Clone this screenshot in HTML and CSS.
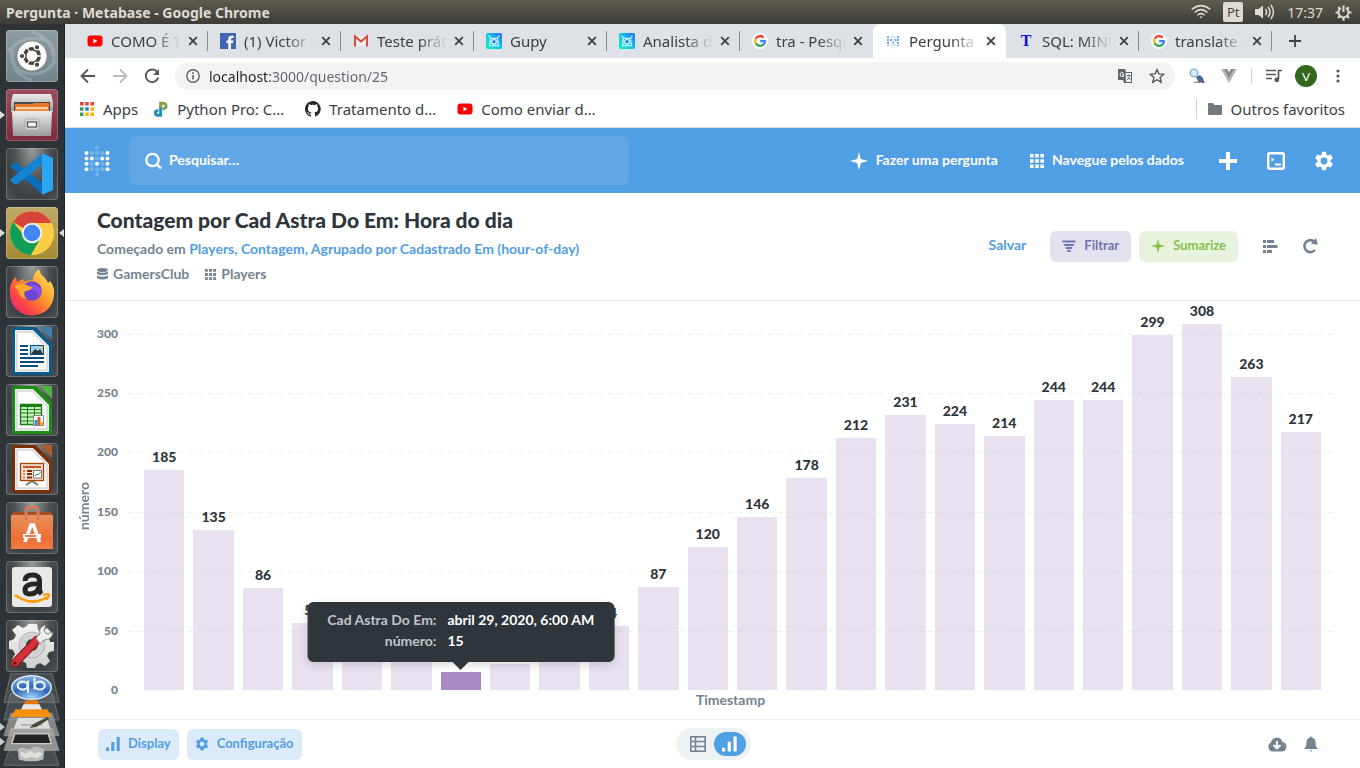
FILE: index.html
```html
<!DOCTYPE html>
<html lang="pt">
<head>
<meta charset="utf-8">
<title>Pergunta · Metabase</title>
<link rel="stylesheet" href="styles.css">
</head>
<body>
<svg class="sprite" width="0" height="0" aria-hidden="true">
  <defs>
    <linearGradient id="steel" x1="0" y1="0" x2="0" y2="1"><stop offset="0" stop-color="#ededed"/><stop offset="1" stop-color="#9b9b9b"/></linearGradient>
    <linearGradient id="pale" x1="0" y1="0" x2="0" y2="1"><stop offset="0" stop-color="#f4f4f4"/><stop offset="1" stop-color="#cfcfcf"/></linearGradient>
    <linearGradient id="fox" x1="1" y1="0" x2="0" y2="1"><stop offset="0" stop-color="#fff36b"/><stop offset=".4" stop-color="#ffa02c"/><stop offset=".7" stop-color="#ff4a41"/><stop offset="1" stop-color="#e31587"/></linearGradient>
    <linearGradient id="gupy" x1="0" y1="1" x2="1" y2="0"><stop offset="0" stop-color="#12f0c0"/><stop offset=".55" stop-color="#14bff0"/><stop offset="1" stop-color="#2469ff"/></linearGradient>
    <linearGradient id="bag" x1="0" y1="0" x2="0" y2="1"><stop offset="0" stop-color="#e9905a"/><stop offset=".7" stop-color="#ee6f36"/><stop offset="1" stop-color="#f27c46"/></linearGradient>
    <radialGradient id="orb" cx=".5" cy=".9" r=".9"><stop offset="0" stop-color="#9fd0fa"/><stop offset=".5" stop-color="#2c66b8"/><stop offset="1" stop-color="#8fb4e2"/></radialGradient>
    <symbol id="close" viewBox="0 0 10 10"><path d="M1.2 1.2l7.6 7.6M8.8 1.2L1.2 8.8" stroke="#3c4043" stroke-width="1.8" fill="none"/></symbol>
    <symbol id="youtube" viewBox="0 0 16 16"><rect x=".5" y="2.5" width="15" height="11" rx="3" fill="#f00"/><path d="M6.4 5.7v4.6l4-2.3z" fill="#fff"/></symbol>
    <symbol id="google" viewBox="0 0 16 16"><circle cx="8" cy="8" r="8" fill="#fff"/><g fill="none" stroke-width="2.4"><path d="M11.6 4.6A4.9 4.9 0 0 0 3.7 5.7" stroke="#ea4335"/><path d="M3.7 5.7a4.9 4.9 0 0 0 0 4.6" stroke="#fbbc05"/><path d="M3.7 10.3a4.9 4.9 0 0 0 7.6 1.3" stroke="#34a853"/><path d="M11.3 11.6A4.9 4.9 0 0 0 12.9 8.1H8.2" stroke="#4285f4"/></g></symbol>
    <symbol id="gupyicon" viewBox="0 0 16 16"><rect width="16" height="16" rx="1.5" fill="url(#gupy)"/><path d="M2.500 2.500l2.300 3M13.500 2.500l-2.300 3M4.500 5.300h7l1 7.500h-9z" fill="none" stroke="#e9fbff" stroke-width="1.100"/><circle cx="8" cy="8.800" r="2.300" fill="#1583d8" stroke="#e9fbff" stroke-width="1.100"/></symbol>
    <symbol id="star4" viewBox="0 0 18 18"><path d="M9 0l1.900 7.100L18 9l-7.100 1.900L9 18l-1.900-7.100L0 9l7.100-1.900z" fill="currentColor"/></symbol>
    <symbol id="grid9" viewBox="0 0 14 14"><path d="M0 0h3.600v3.600H0zM5.200 0h3.600v3.600H5.200zM10.400 0H14v3.600h-3.600zM0 5.200h3.600v3.600H0zM5.200 5.200h3.600v3.600H5.200zM10.400 5.200H14v3.600h-3.600zM0 10.400h3.600V14H0zM5.200 10.400h3.600V14H5.200zM10.400 10.400H14V14h-3.600z" fill="currentColor"/></symbol>
    <symbol id="gear" viewBox="0 0 24 24"><path fill="currentColor" fill-rule="evenodd" d="M9.600 1h4.800l.6 3.400 1.900 1.100 3.300-1.200 2.400 4.300-2.600 2.200v2.400l2.600 2.200-2.400 4.300-3.300-1.200-1.900 1.100-.6 3.400H9.600L9 19.600l-1.900-1.100-3.300 1.200-2.400-4.300L4 13.200v-2.400L1.400 8.600l2.400-4.300 3.300 1.200L9 4.400zM12 7.900a4.100 4.100 0 1 0 0 8.200 4.100 4.100 0 0 0 0-8.200z"/></symbol>
    <symbol id="bars" viewBox="0 0 14 14"><path d="M0 10.500h3V14H0zM5.300 5h3v9h-3zM10.700 0h3v14h-3z" fill="currentColor"/></symbol>
  </defs>
</svg>

<header class="panel">
  <span class="panel-title">Pergunta · Metabase - Google Chrome</span>
  <div class="indicators">
    <svg width="20" height="16" viewBox="0 0 20 16" fill="none" stroke="#dfdbd2" stroke-width="1.500"><path d="M.7 5.500Q10-2.300 19.300 5.500M3.500 8.500Q10 2.800 16.500 8.500M6.300 11.300Q10 8 13.700 11.300"/><path d="M8.300 12.600h3.400L10 14.600z" fill="#dfdbd2" stroke="none"/></svg>
    <span class="keyboard">Pt</span>
    <svg width="20" height="16" viewBox="0 0 20 16"><path d="M0 5h3.500L8 1.500v13L3.500 11H0z" fill="#dfdbd2"/><path d="M10.500 5q2.200 3 0 6M13 3q4 5 0 10M15.700 1q5.600 7 0 14" fill="none" stroke="#dfdbd2" stroke-width="1.500"/></svg>
    <span class="clock">17:37</span>
    <svg width="17" height="17" viewBox="0 0 17 17" fill="none" stroke="#dfdbd2"><path d="M5.800 4.200a5 5 0 1 0 5.400 0" stroke-width="2"/><path d="M8.500 1.500V8" stroke-width="2"/><path d="M3.200 3.200l1.500 1.500M13.800 3.200l-1.500 1.500M.5 8.500h2.500M14 8.500h2.500M3 14l1.800-1.800M14 14l-1.800-1.800M8.500 16.800v-3" stroke-width="2.200"/></svg>
  </div>
</header>

<div class="desktop">
  <nav class="launcher" aria-label="Launcher">
    <div class="tiles">
      <a href="#" class="tile slate" aria-label="Ubuntu"><svg viewBox="0 0 52 52"><g fill="none" stroke="#fff" stroke-opacity=".18" stroke-width="3"><path d="M2 22Q14 6 34 9T46 36M50 30Q38 48 20 43T7 20M26 2Q46 8 47 26M26 50Q8 46 8 30"/></g><circle cx="26" cy="26" r="14.500" fill="#fff"/><circle cx="26" cy="26" r="7.300" fill="none" stroke="#444" stroke-width="3.600"/><path d="M26 26l11.500 0M26 26l-6-10.500M26 26l-6 10.500" stroke="#fff" stroke-width="1.300"/><g fill="#444" stroke="#fff" stroke-width="1.200"><circle cx="16" cy="26" r="2.700"/><circle cx="31" cy="17.300" r="2.700"/><circle cx="31" cy="34.700" r="2.700"/></g></svg></a>
      <a href="#" class="tile wine running" aria-label="Arquivos"><svg viewBox="0 0 52 52"><path d="M7 5h38l2 8v10H5V13z" fill="url(#steel)"/><path d="M8 13h36v10H8z" fill="#4b4b4b"/><path d="M9 15h17l2-1h15v8H9z" fill="#e2762f"/><path d="M10 18h32v5H10z" fill="#f9cf9c"/><path d="M9 20h34v4H9z" fill="#e98d41"/><path d="M6 22h40l-1 25H7z" fill="url(#steel)"/><rect x="19" y="30" width="14" height="11" rx="2" fill="#d6d6d6" stroke="#aaa"/><rect x="21.500" y="33" width="9" height="5" fill="#fff" stroke="#555" stroke-width="1.300"/></svg></a>
      <a href="#" class="tile dark" aria-label="Visual Studio Code"><svg viewBox="0 0 52 52"><path d="M5 17l5-3 27 22v11L5 19z" fill="#0a6fbb"/><path d="M5 34l5 3 27-21V5L5 31z" fill="#1484d2"/><path d="M36 5l11 5v32l-11 5z" fill="#2aa5f2"/></svg></a>
      <a href="#" class="tile gold running focused" aria-label="Google Chrome"><svg viewBox="0 0 52 52"><circle cx="26" cy="26" r="22" fill="#fdd04b"/><path d="M26 26L7 15A22 22 0 0 1 45.500 16H26z" fill="#d64537"/><path d="M7 15A22 22 0 0 0 25 48l10-17H20z" fill="#0f9d58"/><path d="M45.500 16H26v10l9 5-10 17A22 22 0 0 0 45.500 16z" fill="#ffcd43"/><circle cx="26" cy="26" r="10.300" fill="#f1f1f1"/><circle cx="26" cy="26" r="8.300" fill="#4285f4"/></svg></a>
      <a href="#" class="tile dark" aria-label="Firefox"><svg viewBox="0 0 52 52"><path d="M4 28C3 20 6 14 10 11l1 5q4-3 8-3l-2 3q6-2 10-2 0-7 6-11 1 5 5 8 3 3 4 6l2-2q5 6 4 14A22 21 0 0 1 4 28z" fill="url(#fox)"/><circle cx="26" cy="25" r="9.800" fill="#6b46cf"/><path d="M16 24q5-6 14-5 5 2 5 8a9 9 0 0 1-4 6q2-6-2-9z" fill="#9059f6" opacity=".7"/><path d="M8 20q8-4 12-1 4 2 7 2-3 4-8 4-2 5 2 8-8-1-9-9z" fill="#ffa92f"/></svg></a>
      <a href="#" class="tile dark" aria-label="Writer"><svg viewBox="0 0 52 52"><path d="M9 2h21l16 17v28q0 3-3 3H9q-3 0-3-3V5q0-3 3-3z" fill="#0b5a8c"/><path d="M34 2h12v13z" fill="#3b80ad"/><path d="M9 5h18l16 16v26H9z" fill="#eee"/><path d="M11 7h16v1l14 14v23H11z" fill="#fdfdfd" stroke="#c9c9c9"/><path d="M14 21h8M14 25h8M14 29h8M14 33h24M14 37h24M14 41h18" stroke="#05507f" stroke-width="1.800"/><rect x="24.500" y="20.500" width="13" height="9" fill="#9bd0f2" stroke="#05507f"/><path d="M25 29l4-5 3 2 2-2 3 5z" fill="#333"/><circle cx="35.500" cy="22.500" r="1.500" fill="#f6c03d"/></svg></a>
      <a href="#" class="tile dark" aria-label="Calc"><svg viewBox="0 0 52 52"><path d="M9 2h21l16 17v28q0 3-3 3H9q-3 0-3-3V5q0-3 3-3z" fill="#1b8d10"/><path d="M34 2h12v13z" fill="#4fb445"/><path d="M9 5h18l16 16v26H9z" fill="#eee"/><path d="M11 7h16v1l14 14v23H11z" fill="#fdfdfd" stroke="#c9c9c9"/><path d="M14.500 20.500h21v20h-21z" fill="#c8f0c0" stroke="#1a7d12" stroke-width="1.400"/><path d="M14 22h22" stroke="#1a7d12" stroke-width="2"/><path d="M14 25.500h22M14 29h22M14 33h22M14 37h22M21.500 20v21M28.500 20v21" stroke="#1a7d12" stroke-width="1"/><path d="M27.500 31.500h10v10h-10z" fill="#fff" stroke="#888"/><path d="M28.500 36h3v5h-3z" fill="#2196e0"/><path d="M31.500 33h3v8h-3z" fill="#d8572a"/><path d="M34.500 38h2.500v3h-2.500z" fill="#f0b400"/></svg></a>
      <a href="#" class="tile dark" aria-label="Impress"><svg viewBox="0 0 52 52"><path d="M9 2h21l16 17v28q0 3-3 3H9q-3 0-3-3V5q0-3 3-3z" fill="#7c2e06"/><path d="M34 2h12v13z" fill="#a95c33"/><path d="M9 5h18l16 16v26H9z" fill="#eee"/><path d="M11 7h16v1l14 14v23H11z" fill="#fdfdfd" stroke="#c9c9c9"/><path d="M20 42l6-4 6 4" fill="none" stroke="#777" stroke-width="2"/><rect x="14.500" y="20.500" width="23" height="17" fill="#fbe6d8" stroke="#a8450f" stroke-width="1.400"/><path d="M17 24h18" stroke="#c45a1c" stroke-width="2.200"/><path d="M17 28h2M17 31h2M17 34.500h2" stroke="#d9824d" stroke-width="2"/><path d="M21 28h5M21 31h5M21 34.500h5" stroke="#7c2e06" stroke-width="2"/><rect x="27.500" y="27.500" width="8" height="7.500" fill="#fff" stroke="#777"/><path d="M29 33l2-2 1 1 2.500-3" stroke="#2f9e2f" fill="none"/></svg></a>
      <a href="#" class="tile dark" aria-label="Ubuntu Software"><svg viewBox="0 0 52 52"><path d="M7 10h38l2 5H5z" fill="#a84c2a"/><path d="M5 13h42v34H5z" fill="url(#bag)"/><path d="M20 18V9q0-4 6-4t6 4v9" fill="none" stroke="#d97a5c" stroke-width="3"/><path d="M19 40l6-17h2.500L33.500 40" fill="none" stroke="#fff" stroke-width="3.600"/><path d="M17 34h18" stroke="#fff" stroke-width="4"/><path d="M19 34h11" stroke="#ee6f36" stroke-width="1.800"/></svg></a>
      <a href="#" class="tile dark" aria-label="Amazon"><svg viewBox="0 0 52 52"><rect x="6" y="6" width="40" height="40" rx="3" fill="#e9e9e9"/><path d="M19 20q0-6 7.500-6t7 7v7q0 3 2 5M33 23q-14-1-14 6 0 4 5 4 7 0 9-7" fill="none" stroke="#262626" stroke-width="5"/><path d="M9 34q17 12 32 2" fill="none" stroke="#ff9900" stroke-width="2.700"/><path d="M37 34q7-2 6 0t-2 5" fill="none" stroke="#ff9900" stroke-width="2"/></svg></a>
      <a href="#" class="tile dark" aria-label="Configurações"><svg viewBox="0 0 52 52"><path fill="url(#pale)" d="M22 4h9l1 6 4 2 5-4 5 5-3 6 1 3h4v9l-5 1-2 4 3 5-5 5-5-3-4 2-1 3h-8l-1-5-4-2-5 3-5-5 3-5-2-4-4-1v-8l5-2 2-4-4-5 6-5 5 3 4-2z"/><circle cx="26" cy="25" r="13" fill="#d2d2d2" stroke="#b4b4b4"/><circle cx="26" cy="25" r="6" fill="#444"/><path d="M9 43L31 20" stroke="#8d1418" stroke-width="8.500" stroke-linecap="round"/><path d="M9 43L31 20" stroke="#d5303a" stroke-width="6.500" stroke-linecap="round"/><path d="M30 18l4-4q-2-7 6-9l-2 6 3 3 6-2q-1 8-9 8l-4 4z" fill="#eee" stroke="#888"/><circle cx="9" cy="43" r="1.500" fill="#60090c"/></svg></a>
    </div>
    <svg class="folded" viewBox="0 0 65 96"><g fill="#8a9094" fill-opacity=".28" stroke="#a8adb0" stroke-opacity=".45"><path d="M11 1h42l7 29H4z"/><path d="M11 21h42l7 27H4z"/><path d="M11 41h42l7 23H4z" fill="#999" fill-opacity=".8"/><path d="M11 56h42l7 23H4z" fill="#aaa" fill-opacity=".8"/><path d="M9 79h46l5 15H4z"/></g><ellipse cx="32" cy="15" rx="20" ry="12" fill="url(#orb)" stroke="#dbe8f6" stroke-width="1.500"/><g fill="none" stroke="#e9f2fc" stroke-width="2.200"><ellipse cx="23" cy="13" rx="5" ry="4"/><path d="M28.500 8v12M35 5v12"/><ellipse cx="40.500" cy="13" rx="5" ry="4"/></g><path d="M26 28h12l4 10H22z" fill="#e8750c"/><path d="M24 32h16l3 6H21z" fill="#e8e8e8"/><path d="M16 37h32l5 8H11z" fill="#f7900f"/><path d="M18 46h30l3 11H14z" fill="#ddd"/><path d="M21 53h22" stroke="#888"/><path d="M30 56l4-4 14-7 2 2-13 8z" fill="#4b4b38"/><path d="M15 62h34l3 10H12z" fill="#222" stroke="#c8c8c8" stroke-width="1.500"/><path d="M18 78q4-3 8-1t7-1 12 2l-1 10q-12 4-25 0z" fill="#b9bcba"/><path d="M21 80l5 2 4-3 5 3 5-2 3 3-6 4-5-2-6 2-5-3z" fill="#dfe1df"/><path d="M0 51l5 4-5 4zM0 66l5 4-5 4z" fill="#ccc"/></svg>
  </nav>

  <div class="browser">
    <div class="tabs">
      <div class="tab"><svg class="fav"><use href="#youtube"/></svg><span class="tab-name">COMO É TU</span><button class="tab-close" aria-label="Fechar"><svg><use href="#close"/></svg></button></div>
      <div class="tab"><svg class="fav" viewBox="0 0 16 16"><rect width="16" height="16" fill="#4267b2"/><path d="M8.300 16V10H6.400V7.500h1.900V6q0-3.300 3.200-3.300h2V5h-1.300q-1.200 0-1.200 1.200v1.300h2.400L13 10h-2v6z" fill="#fff"/></svg><span class="tab-name">(1) Victor S</span><button class="tab-close" aria-label="Fechar"><svg><use href="#close"/></svg></button></div>
      <div class="tab"><svg class="fav" viewBox="0 0 16 16"><path d="M2 3h12v10.500H2z" fill="#eee"/><path d="M2 13.500V3.500l6 5 6-5v10" fill="none" stroke="#d54b3d" stroke-width="2"/></svg><span class="tab-name">Teste prát</span><button class="tab-close" aria-label="Fechar"><svg><use href="#close"/></svg></button></div>
      <div class="tab"><svg class="fav"><use href="#gupyicon"/></svg><span class="tab-name">Gupy</span><button class="tab-close" aria-label="Fechar"><svg><use href="#close"/></svg></button></div>
      <div class="tab"><svg class="fav"><use href="#gupyicon"/></svg><span class="tab-name">Analista d</span><button class="tab-close" aria-label="Fechar"><svg><use href="#close"/></svg></button></div>
      <div class="tab last"><svg class="fav"><use href="#google"/></svg><span class="tab-name">tra - Pesqu</span><button class="tab-close" aria-label="Fechar"><svg><use href="#close"/></svg></button></div>
      <div class="tab active"><svg class="fav" viewBox="0 0 16 16" fill="#509ee3"><path d="M2 3h2v2H2zM2 6h2v2H2zM2 9h2v2H2zM2 12h2v1H2zM5 6h2v2H5zM7.200 8.500h2v2h-2zM9.500 6h2v2h-2zM12 3h2v2h-2zM12 6h2v2h-2zM12 9h2v2h-2zM12 12h2v1h-2z" opacity=".85"/><path d="M7 1h2v1.500H7zM5 3h6v2H5zM5 11h6v2H5zM7 14h2v1.500H7z" opacity=".2"/></svg><span class="tab-name">Pergunta ·</span><button class="tab-close" aria-label="Fechar"><svg><use href="#close"/></svg></button></div>
      <div class="tab"><span class="fav letter-fav">T</span><span class="tab-name">SQL: MINU</span><button class="tab-close" aria-label="Fechar"><svg><use href="#close"/></svg></button></div>
      <div class="tab"><svg class="fav"><use href="#google"/></svg><span class="tab-name">translate -</span><button class="tab-close" aria-label="Fechar"><svg><use href="#close"/></svg></button></div>
      <button class="new-tab" aria-label="Nova guia"><svg width="12" height="12" viewBox="0 0 12 12"><path d="M6 0v12M0 6h12" stroke="#3c4043" stroke-width="1.800"/></svg></button>
    </div>

    <div class="toolbar">
      <button class="tool" aria-label="Voltar"><svg width="16" height="16" viewBox="0 0 16 16"><path d="M15 8H2M8 1.500L1.500 8 8 14.500" fill="none" stroke="#54585c" stroke-width="1.900"/></svg></button>
      <button class="tool" aria-label="Avançar"><svg width="16" height="16" viewBox="0 0 16 16"><path d="M1 8h13M8 1.500L14.500 8 8 14.500" fill="none" stroke="#babcbe" stroke-width="1.900"/></svg></button>
      <button class="tool" aria-label="Recarregar"><svg width="16" height="16" viewBox="0 0 16 16"><path d="M13.500 4.500A6.300 6.300 0 1 0 14.200 9.500" fill="none" stroke="#54585c" stroke-width="1.900"/><path d="M15 1v6H9z" fill="#54585c"/></svg></button>
      <div class="omnibox">
        <svg width="14" height="14" viewBox="0 0 14 14"><circle cx="7" cy="7" r="6.200" fill="none" stroke="#5f6368" stroke-width="1.400"/><path d="M7 6v4.500M7 3.300v1.600" stroke="#5f6368" stroke-width="1.600"/></svg>
        <input class="url" type="text" aria-label="Endereço" value="localhost:3000/question/25">
        <svg width="16" height="16" viewBox="0 0 16 16"><path d="M1 1h7l1 3h6v11H7l-1-3H1z" fill="#5f6368"/><path d="M8.500 5H14v9H9z" fill="#f1f3f4"/><path d="M6.500 5.200A2 2 0 1 0 7 6.800H5" stroke="#fff" fill="none"/><path d="M9.500 7.500h4M11.500 6.500v1M10 12q2.500-1.500 3-4.500M10.500 9l3 3" stroke="#5f6368" fill="none" stroke-width=".9"/></svg>
        <svg width="16" height="16" viewBox="0 0 16 16"><path d="M8 1.500l1.900 4.400 4.800.4-3.600 3.200 1.100 4.700L8 11.700l-4.200 2.500 1.100-4.700L1.300 6.300l4.800-.4z" fill="none" stroke="#54585c" stroke-width="1.400"/></svg>
      </div>
      <div class="extensions">
        <svg width="16" height="16" viewBox="0 0 16 16"><circle cx="5" cy="5" r="3.800" fill="#d8eefb" stroke="#8cb8d6" stroke-width="1.500"/><path d="M7 9l4-2 3 3 1 4-5 1z" fill="#456a94"/><path d="M5 13.500h4l2 1.500H5z" fill="#999"/><path d="M13 14l2.500.5" stroke="#a33" stroke-width="1.500"/></svg>
        <svg width="16" height="16" viewBox="0 0 16 16"><path d="M0 1h6l2 3.500L10 1h6L8 15z" fill="#b5b5b5"/><path d="M3 1h3l2 3.500L10 1h3L8 10z" fill="#8a8a8a"/></svg>
      </div>
      <div class="account">
        <svg width="16" height="14" viewBox="0 0 16 14"><path d="M0 1.500h10M0 5.500h10M0 9.500h6M16 1.500h-3.500V10" fill="none" stroke="#54585c" stroke-width="1.700"/><circle cx="10.800" cy="10.800" r="2.400" fill="#54585c"/></svg>
        <button class="avatar">V</button>
        <svg width="16" height="16" viewBox="0 0 16 16" fill="#54585c"><circle cx="8" cy="3" r="1.600"/><circle cx="8" cy="8" r="1.600"/><circle cx="8" cy="13" r="1.600"/></svg>
      </div>
    </div>

    <nav class="bookmarks" aria-label="Favoritos">
      <a href="#" class="bookmark apps"><svg viewBox="0 0 16 16"><path d="M1 1h3.500v3.500H1zM6.200 1h3.500v3.500H6.200zM11.500 1H15v3.500h-3.500z" fill="#ea4335"/><path d="M1 6.200h3.500v3.500H1zM1 11.500h3.500V15H1z" fill="#34a05a"/><path d="M6.200 6.200h3.500v3.500H6.200z" fill="#2a7de8"/><path d="M11.500 6.200H15v3.500h-3.500zM6.200 11.500h3.500V15H6.200zM11.500 11.500H15V15h-3.500z" fill="#f7b300"/></svg><span>Apps</span></a>
      <a href="#" class="bookmark"><svg viewBox="0 0 16 16"><path d="M7.700 5v9.200H4.600a2.200 2.200 0 0 1 0-4.400h.9" fill="none" stroke="#2590b8" stroke-width="3"/><path d="M7.700 7V2.200h2.600a2.700 2.700 0 0 1 0 5.600h-.8" fill="none" stroke="#83a04a" stroke-width="3"/></svg><span>Python Pro: C…</span></a>
      <a href="#" class="bookmark"><svg viewBox="0 0 16 16"><path fill="#24292e" d="M8 0C3.600 0 0 3.600 0 8c0 3.500 2.300 6.500 5.500 7.600.4.100.5-.2.500-.4v-1.500c-2.200.5-2.700-.9-2.700-.9-.4-.9-.9-1.200-.9-1.200-.7-.5.100-.5.100-.5.800.100 1.200.800 1.200.800.700 1.200 1.900.900 2.300.700.100-.500.300-.900.500-1.100-1.800-.200-3.600-.900-3.600-4 0-.900.300-1.600.800-2.100-.100-.200-.400-1 .100-2.100 0 0 .700-.200 2.200.800a7.600 7.600 0 0 1 4 0c1.500-1 2.200-.800 2.200-.800.400 1.100.200 1.900.100 2.100.500.600.800 1.300.800 2.100 0 3.100-1.900 3.700-3.700 3.900.300.300.600.800.600 1.500v2.200c0 .200.100.500.500.400A8 8 0 0 0 8 0z"/></svg><span>Tratamento d…</span></a>
      <a href="#" class="bookmark"><svg><use href="#youtube"/></svg><span>Como enviar d…</span></a>
      <a href="#" class="bookmark other"><svg viewBox="0 0 16 16"><path d="M1 3q0-1 1-1h4l1.500 2H14q1 0 1 1v8q0 1-1 1H2q-1 0-1-1z" fill="#74787c"/></svg><span>Outros favoritos</span></a>
    </nav>

    <div class="app">
      <header class="app-bar">
        <a href="#" class="logo" aria-label="Metabase"><svg width="32" height="32" viewBox="0 0 32 32" fill="#fff"><g><circle cx="5.500" cy="8" r="2"/><circle cx="26.500" cy="8" r="2"/><circle cx="5.500" cy="13.400" r="2"/><circle cx="10.800" cy="13.400" r="2"/><circle cx="21.200" cy="13.400" r="2"/><circle cx="26.500" cy="13.400" r="2"/><circle cx="5.500" cy="18.800" r="2"/><circle cx="16" cy="18.800" r="2"/><circle cx="26.500" cy="18.800" r="2"/><circle cx="5.500" cy="24.200" r="2"/><circle cx="26.500" cy="24.200" r="2"/></g><g opacity=".22"><circle cx="16" cy="2.500" r="2"/><circle cx="10.800" cy="8" r="2"/><circle cx="16" cy="8" r="2"/><circle cx="21.200" cy="8" r="2"/><circle cx="16" cy="13.400" r="2"/><circle cx="10.800" cy="18.800" r="2"/><circle cx="21.200" cy="18.800" r="2"/><circle cx="10.800" cy="24.200" r="2"/><circle cx="16" cy="24.200" r="2"/><circle cx="21.200" cy="24.200" r="2"/><circle cx="16" cy="29.600" r="2"/></g></svg></a>
        <label class="search"><svg width="18" height="18" viewBox="0 0 18 18"><circle cx="7.500" cy="8" r="6.200" fill="none" stroke="#fff" stroke-width="2.200"/><path d="M12 12.500l4 4" stroke="#fff" stroke-width="2.400"/></svg><input type="search" aria-label="Pesquisar" placeholder="Pesquisar…"></label>
        <nav class="app-links">
          <a href="#" class="app-link"><svg width="18" height="18"><use href="#star4"/></svg><span class="label">Fazer uma pergunta</span></a>
          <a href="#" class="app-link browse"><svg width="14" height="14"><use href="#grid9"/></svg><span class="label">Navegue pelos dados</span></a>
          <button class="app-icon" aria-label="Criar"><svg width="18" height="18" viewBox="0 0 18 18"><path d="M9 0v18M0 9h18" stroke="#fff" stroke-width="4"/></svg></button>
          <button class="app-icon" aria-label="SQL"><svg width="18" height="18" viewBox="0 0 18 18"><rect x="1.200" y="1.200" width="15.600" height="15.600" rx="1.500" fill="none" stroke="#fff" stroke-width="2.400"/><path d="M4.500 5.500L7.500 7.500 4.500 9.500z" fill="#fff"/><path d="M8 12.500h6" stroke="#fff" stroke-width="2"/></svg></button>
          <button class="app-icon" aria-label="Configurações"><svg width="20" height="20"><use href="#gear"/></svg></button>
        </nav>
      </header>

      <section class="question">
        <div class="question-info">
          <h1>Contagem por Cad Astra Do Em: Hora do dia</h1>
          <p class="lineage">Começado em <a href="#">Players, Contagem, Agrupado por Cadastrado Em (hour-of-day)</a></p>
          <div class="sources">
            <a href="#"><svg width="11" height="12" viewBox="0 0 11 12" fill="#74838f"><ellipse cx="5.500" cy="2" rx="5.500" ry="2"/><path d="M0 3.500q5.500 2.500 11 0V6q-5.500 2.500-11 0zM0 7.400q5.500 2.500 11 0V10q-5.500 3-11 0z"/></svg>GamersClub</a>
            <a href="#"><svg width="11" height="11"><use href="#grid9"/></svg>Players</a>
          </div>
        </div>
        <div class="actions">
          <button class="save"><span class="label">Salvar</span></button>
          <button class="pill filter"><svg width="14" height="12" viewBox="0 0 14 12"><path d="M1.200 1.500h11.600M2.800 5h8.400M4.500 8h5M6 11h2" stroke="currentColor" stroke-width="1.800" stroke-linecap="round"/></svg><span class="label">Filtrar</span></button>
          <button class="pill summarize"><svg width="14" height="14"><use href="#star4"/></svg><span class="label">Sumarize</span></button>
          <button class="plain editor" aria-label="Editor"><svg width="15" height="13" viewBox="0 0 15 13" fill="currentColor"><path d="M0 0h3v3H0zM4 0h7v3H4zM0 5h3v3H0zM4 5h10.500v3H4zM0 10h3v3H0zM4 10h5v3H4z"/></svg></button>
          <button class="plain" aria-label="Atualizar"><svg width="16" height="16" viewBox="0 0 16 16"><path d="M12.500 3.800A6 6 0 1 0 13 12" fill="none" stroke="currentColor" stroke-width="2.600"/><path d="M14 0l1.800 6.800-6.800-1z" fill="currentColor"/></svg></button>
        </div>
      </section>

      <section class="chart">
        <div class="y-title"><span>número</span></div>
        <div class="axis"><span>0</span><span>50</span><span>100</span><span>150</span><span>200</span><span>250</span><span>300</span></div>
        <div class="plot">
          <div class="grid-lines"><i></i><i></i><i></i><i></i><i></i><i></i></div>
          <div class="columns">
            <div class="column"><b>185</b><div class="bar" style="--v:185"></div></div>
            <div class="column"><b>135</b><div class="bar" style="--v:135"></div></div>
            <div class="column"><b>86</b><div class="bar" style="--v:86"></div></div>
            <div class="column"><b>56</b><div class="bar" style="--v:56"></div></div>
            <div class="column"><div class="bar" style="--v:40"></div></div>
            <div class="column"><div class="bar" style="--v:30"></div></div>
            <div class="column"><div class="bar selected" style="--v:15">
              <dl class="tooltip"><dt>Cad Astra Do Em:</dt><dd>abril 29, 2020, 6:00 AM</dd><dt>número:</dt><dd>15</dd></dl>
            </div></div>
            <div class="column"><div class="bar" style="--v:22"></div></div>
            <div class="column"><div class="bar" style="--v:38"></div></div>
            <div class="column"><b>54</b><div class="bar" style="--v:54"></div></div>
            <div class="column"><b>87</b><div class="bar" style="--v:87"></div></div>
            <div class="column"><b>120</b><div class="bar" style="--v:120"></div></div>
            <div class="column"><b>146</b><div class="bar" style="--v:146"></div></div>
            <div class="column"><b>178</b><div class="bar" style="--v:178"></div></div>
            <div class="column"><b>212</b><div class="bar" style="--v:212"></div></div>
            <div class="column"><b>231</b><div class="bar" style="--v:231"></div></div>
            <div class="column"><b>224</b><div class="bar" style="--v:224"></div></div>
            <div class="column"><b>214</b><div class="bar" style="--v:214"></div></div>
            <div class="column"><b>244</b><div class="bar" style="--v:244"></div></div>
            <div class="column"><b>244</b><div class="bar" style="--v:244"></div></div>
            <div class="column"><b>299</b><div class="bar" style="--v:299"></div></div>
            <div class="column"><b>308</b><div class="bar" style="--v:308"></div></div>
            <div class="column"><b>263</b><div class="bar" style="--v:263"></div></div>
            <div class="column"><b>217</b><div class="bar" style="--v:217"></div></div>
          </div>
        </div>
        <div class="x-title">Timestamp</div>
      </section>

      <footer class="footer">
        <div class="footer-left">
          <button class="pill blue"><svg width="14" height="14"><use href="#bars"/></svg><span class="label">Display</span></button>
          <button class="pill blue"><svg width="14" height="14"><use href="#gear"/></svg><span class="label">Configuração</span></button>
        </div>
        <div class="toggle">
          <button aria-label="Tabela"><svg width="16" height="16" viewBox="0 0 16 16" fill="none" stroke="#74838f" stroke-width="1.600"><rect x=".8" y=".8" width="14.400" height="14.400"/><path d="M5.500 1v14M1 5.500h14M1 10.500h14"/></svg></button>
          <button class="on" aria-label="Gráfico"><svg width="15" height="16"><use href="#bars"/></svg></button>
        </div>
        <div class="footer-right">
          <button class="plain" aria-label="Baixar"><svg width="20" height="15" viewBox="0 0 20 15"><path d="M5 14.500a5 5 0 0 1-1-9.200A6 6 0 0 1 15.500 5a4.800 4.800 0 0 1-.5 9.500z" fill="currentColor"/><path d="M10 4v7M6.500 8l3.500 3.500L13.500 8" fill="none" stroke="#fff" stroke-width="1.900"/></svg></button>
          <button class="plain" aria-label="Alertas"><svg width="14" height="16" viewBox="0 0 14 16" fill="currentColor"><path d="M7 0l1 1.500q3.500 1 3.500 5 0 4.500 2.500 6.500H0q2.500-2 2.500-6.500 0-4 3.500-5z"/><path d="M5.500 14h3q0 1.800-1.500 1.800T5.500 14z" opacity=".6"/></svg></button>
        </div>
      </footer>
    </div>
  </div>
</div>
</body>
</html>
```
FILE: styles.css
```css
* { box-sizing: border-box; }
body { margin: 0; height: 100vh; display: flex; flex-direction: column; overflow: hidden; background: #fff; color: #2e353b; font-family: Lato, sans-serif; font-size: 14px; }
button { border: 0; padding: 0; background: none; font: inherit; color: inherit; display: flex; align-items: center; justify-content: center; }
a { color: inherit; text-decoration: none; }
svg { flex: none; display: block; }
.sprite { position: absolute; }

/* System panel */
.panel { flex: none; height: 24px; padding: 0 8px 0 6px; display: flex; align-items: center; justify-content: space-between; background: linear-gradient(#5e5b50, #3d3b36); color: #dfdbd2; font-family: "Noto Sans", sans-serif; }
.panel-title { font-weight: 700; font-size: 14px; }
.indicators { display: flex; align-items: center; gap: 12px; }
.keyboard { width: 20px; height: 20px; border-radius: 2px; background: #dfdbd2; color: #45433d; text-align: center; line-height: 20px; font-size: 13px; }

/* Launcher */
.desktop { flex: 1; min-height: 0; display: flex; }
.launcher { flex: none; width: 65px; overflow: hidden; background: #2d3336; border-right: 1px solid #1d2224; }
.tiles { padding: 6px 6px 0; display: flex; flex-direction: column; gap: 7px; }
.tile { position: relative; width: 52px; height: 52px; border-radius: 4px; box-shadow: inset 0 0 0 1px rgba(255,255,255,.22); }
.tile svg { width: 52px; height: 52px; }
.slate { background: linear-gradient(#8f9da1, #74848c); }
.wine { background: linear-gradient(#9a4d5a, #7d2c3c); }
.dark { background: radial-gradient(ellipse at 50% 0, #9a9c9d, #4a4e50 50%, #3c4042 70%, #4d5254); }
.gold { background: linear-gradient(#bfa968, #a58b35); }
.running::before, .focused::after { content: ""; position: absolute; top: 22px; border: solid transparent; border-width: 4px 5px; }
.running::before { left: -6px; border-left-color: #ddd; border-right-width: 0; }
.focused::after { right: -6px; border-right-color: #ddd; border-left-width: 0; }
.folded { width: 64px; height: 96px; }

/* Browser chrome */
.browser { flex: 1; min-width: 0; display: flex; flex-direction: column; }
.tabs, .bookmarks, .url { font-family: "Noto Sans", sans-serif; font-size: 15px; color: #3c4043; }
.tabs { flex: none; height: 34px; padding-left: 10px; display: flex; background: #dee1e6; }
.tab { position: relative; flex: 0 1 133px; min-width: 0; padding: 0 10px 0 12px; display: flex; align-items: center; }
.tab::after { content: ""; position: absolute; right: 0; top: 7px; width: 1px; height: 20px; background: #85888d; }
.tab.last::after, .tab.active::after { display: none; }
.fav { width: 16px; height: 16px; flex: none; }
.letter-fav { color: #1111e0; font: bold 16px/16px "Liberation Serif", serif; text-align: center; }
.tab-name { flex: 1; min-width: 0; margin: 0 7px 0 8px; overflow: hidden; white-space: nowrap; -webkit-mask-image: linear-gradient(to right, #000 60%, transparent); mask-image: linear-gradient(to right, #000 60%, transparent); }
.tab-close svg { width: 10px; height: 10px; }
.active { background: #fff; border-radius: 8px 8px 0 0; }
.new-tab { width: 46px; }

.toolbar { flex: none; height: 36px; padding: 0 14px; display: flex; align-items: center; gap: 14px; }
.tool { width: 18px; height: 16px; }
.omnibox { flex: 1; min-width: 0; height: 28px; padding: 0 10px 0 11px; display: flex; align-items: center; gap: 16px; border-radius: 14px; background: #f1f3f4; }
.url { flex: 1; min-width: 0; margin-left: -7px; padding: 0; border: 0; font-size: 14px; color: transparent; background: linear-gradient(to right, #202124 61px, #5f6368 61px); -webkit-background-clip: text; background-clip: text; }
.extensions { padding-right: 14px; border-right: 1px solid #cfd1d3; display: flex; gap: 16px; }
.account { display: flex; align-items: center; gap: 13px; }
.avatar { width: 22px; height: 22px; border-radius: 50%; background: #33691e; color: #fff; font-size: 12px; }

.bookmarks { flex: none; height: 34px; padding: 0 15px 4px 14px; display: flex; align-items: center; gap: 21px; border-bottom: 1px solid #dcdee0; }
.bookmark { display: flex; align-items: center; gap: 8px; white-space: nowrap; }
.bookmark svg { width: 16px; height: 16px; }
.apps { margin-right: -6px; }
.other { margin-left: auto; padding-left: 10px; border-left: 1px solid #cfd1d3; }

/* Application bar */
.app { flex: 1; min-height: 0; display: flex; flex-direction: column; }
.app-bar { flex: none; height: 65px; padding: 0 12px 0 16px; display: flex; align-items: center; background: #509ee3; color: #fff; font-weight: 700; }
.label { padding-bottom: 3px; }
.logo { margin-right: 16px; }
.search { flex: 0 1 500px; height: 49px; padding: 0 16px; display: flex; align-items: center; gap: 6px; border-radius: 6px; background: rgba(255,255,255,.1); }
.search input { flex: 1; min-width: 0; padding: 0 0 3px; border: 0; background: none; outline: 0; font: inherit; color: #fff; }
.search input::placeholder { color: #fff; }
.app-links { margin-left: auto; display: flex; align-items: center; }
.app-link { display: flex; align-items: center; gap: 8px; white-space: nowrap; }
.browse { margin: 0 20px 0 32px; }
.app-icon { width: 48px; height: 32px; }

/* Question header */
.question { flex: none; min-height: 108px; padding: 12px 33px 16px 32px; display: flex; align-items: flex-start; justify-content: space-between; border-bottom: 1px solid #edf0f1; font-weight: 700; color: #74838f; }
h1 { margin: 0; font-size: 21px; line-height: 30px; font-weight: 900; color: #2e353b; }
.lineage { margin: 4px 0 0; line-height: 20px; }
.lineage a, .save { color: #509ee3; }
.sources { margin-top: 5px; display: flex; gap: 16px; line-height: 20px; }
.sources a { display: flex; align-items: center; gap: 5px; }
.actions { display: flex; align-items: center; margin-top: 25px; }
.save { margin-right: 24px; }
.pill { height: 31px; padding: 0 12px; gap: 8px; border-radius: 6px; margin-right: 8px; font-size: 13px; font-weight: 700; }
.filter { background: #e2e2ef; color: #7172ad; }
.summarize { background: #e7f3dc; color: #88bf4d; }
.plain { width: 34px; height: 32px; color: #74838f; }
.editor { margin: 0 6px 0 7px; }

/* Chart */
.chart { flex: 1; min-height: 0; padding: 0 27px 0 12px; display: grid; grid-template: minmax(0, 1fr) 29px / 14px 27px minmax(0, 1fr); color: #74838f; font-weight: 700; }
.y-title { display: flex; align-items: center; padding-top: 22px; }
.y-title span { writing-mode: vertical-rl; transform: rotate(180deg); line-height: 14px; }
.axis, .grid-lines { height: 100%; display: flex; flex-direction: column-reverse; }
.axis { margin-top: 7px; font-size: 12px; font-weight: 900; }
.axis span { flex: none; height: 15.270%; display: flex; align-items: flex-end; justify-content: flex-end; line-height: 14px; }
.plot { display: grid; margin-left: 10px; }
.grid-lines, .columns { grid-area: 1 / 1; min-height: 0; }
.grid-lines i { flex: none; height: 15.270%; background: repeating-linear-gradient(to right, #eff0f1 0 5px, transparent 5px 10px) top / 100% 1px no-repeat; }
.columns { position: relative; display: grid; grid-template-columns: repeat(24, minmax(0, 1fr)); gap: 9px; padding: 0 12px 0 16px; }
.column { display: flex; flex-direction: column; justify-content: flex-end; align-items: center; min-height: 0; }
.column b { flex: none; line-height: 18px; margin-bottom: 4px; font-weight: 900; color: #2e353b; }
.bar { flex: none; width: 100%; height: calc(var(--v) * .3055%); background: rgba(169,137,197,.25); }
.selected { position: relative; background: #a989c5; }
.x-title { grid-column: 3; text-align: center; line-height: 20px; margin-left: 10px; }
.tooltip { position: absolute; z-index: 1; left: 50%; bottom: calc(100% + 10px); transform: translateX(-50%); margin: 0; padding: 7px 20px 11px; display: grid; grid-template-columns: auto auto; column-gap: 11px; border-radius: 6px; background: #2e353b; color: #fff; line-height: 21px; white-space: nowrap; box-shadow: 0 3px 10px rgba(0,0,0,.15); }
.tooltip dt { color: #c0c5c9; text-align: right; }
.tooltip dd { margin: 0; }
.tooltip::after { content: ""; position: absolute; top: 100%; left: 50%; margin-left: -8px; border: 8px solid transparent; border-top-color: #2e353b; border-bottom: 0; }

/* Footer */
.footer { flex: none; height: 49px; padding: 0 32px 0 33px; display: grid; grid-template-columns: 1fr auto 1fr; align-items: center; border-top: 1px solid #edf0f1; }
.footer-left, .footer-right { display: flex; }
.footer-right { justify-content: flex-end; }
.blue { background: #dcebfa; color: #509ee3; padding: 0 8px; }
.toggle { height: 32px; padding: 0 5px 0 6px; display: flex; align-items: center; border-radius: 16px; background: #edf2f5; }
.toggle button { width: 32px; height: 24px; border-radius: 12px; }
.toggle .on { background: #509ee3; color: #fff; }
```
